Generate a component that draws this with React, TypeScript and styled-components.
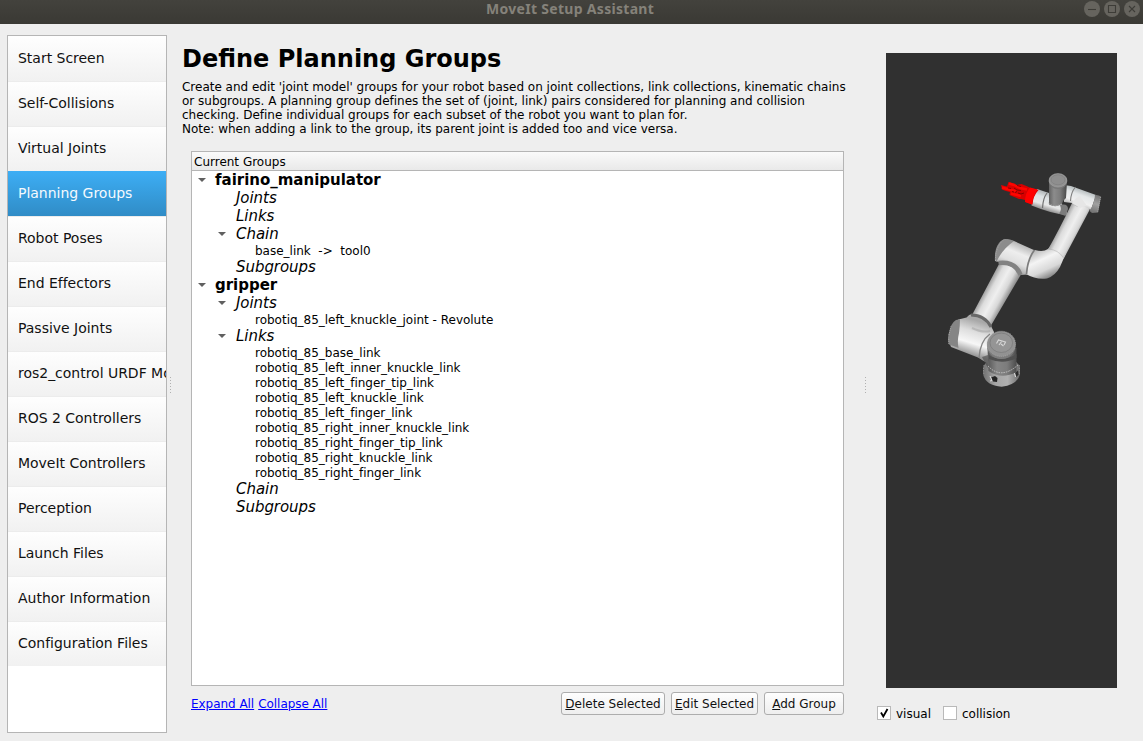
import React from "react";
import styled, { createGlobalStyle } from "styled-components";

const Global = createGlobalStyle`
  * { box-sizing: border-box; }
  body { margin: 0; background: #eeeeee; color: #000; font: 12px/14px "DejaVu Sans", sans-serif; overflow: hidden; }
`;

const Window = styled.div`
  width: 1143px;
  height: 741px;
  display: flex;
  flex-direction: column;
`;

const TitleBar = styled.header`
  height: 24px;
  flex: none;
  display: grid;
  grid-template-columns: 1fr auto 1fr;
  background: linear-gradient(#43423d, #3a3934);
  color: #85827a;
`;

const Title = styled.div`
  grid-column: 2;
  width: 171px;
  white-space: nowrap;
  font: bold 14px/18px "Noto Sans", sans-serif;
  letter-spacing: 0.3px;
`;

const WindowButtons = styled.div`
  display: flex;
  justify-content: flex-end;
  gap: 4px;
  padding: 1px 3px 0 0;
`;

const Content = styled.div`
  flex: 1;
  display: flex;
  padding-left: 7px;
`;

const Sidebar = styled.nav`
  width: 160px;
  height: 698px;
  margin-top: 11px;
  border: 1px solid #b5b5b5;
  background: #fff;
  overflow: hidden;
`;

const NavItem = styled.div<{ $active?: boolean }>`
  height: 45px;
  padding-left: 10px;
  font-size: 14px;
  line-height: ${(p) => (p.$active ? 44 : 43)}px;
  letter-spacing: -0.02px;
  white-space: nowrap;
  color: ${(p) => (p.$active ? "#f4f9fd" : "#111")};
  background: ${(p) =>
    p.$active ? "linear-gradient(#3daef5, #308cc6)" : "linear-gradient(#fefefe, #f1f1f1)"};
  border-top: ${(p) => (p.$active ? "0" : "1px solid #ececec")};

  &:first-child {
    border-top-color: #fefefe;
  }
`;

const Splitter = styled.div<{ $width: number }>`
  width: ${(p) => p.$width}px;
  flex: none;
  display: flex;
  flex-direction: column;
  align-items: center;
  gap: 2px;
  padding-top: 353px;
`;

const Dot = styled.i`
  width: 1px;
  height: 1px;
  background: #b0b0b0;
`;

const Main = styled.main`
  width: 686px;
  flex: none;
  padding: 20px 0 0 8px;
`;

const Heading = styled.h1`
  margin: 0;
  font-size: 24px;
  line-height: 30px;
  font-weight: bold;
`;

const Description = styled.p`
  margin: 6px 0 15px;
  white-space: pre;
  letter-spacing: -0.01px;
`;

const TreeBox = styled.section`
  width: 653px;
  height: 535px;
  margin-left: 9px;
  border: 1px solid #b5b5b5;
  background: #fff;
`;

const TreeHeader = styled.div`
  height: 19px;
  padding: 3px 2px 0;
  line-height: 14px;
  border-bottom: 1px solid #b5b5b5;
  background: linear-gradient(#fafafa, #e9e9e9);
`;

type RowKind = "group" | "section" | "leaf";

const TreeRow = styled.div<{ $kind: RowKind }>`
  display: flex;
  align-items: center;
  white-space: pre;
  height: ${(p) => (p.$kind === "leaf" ? 15 : 18)}px;
  line-height: ${(p) => (p.$kind === "leaf" ? 15 : 18)}px;
  font-size: ${(p) => (p.$kind === "leaf" ? 12 : 15)}px;
  font-weight: ${(p) => (p.$kind === "group" ? "bold" : "normal")};
  font-style: ${(p) => (p.$kind === "section" ? "italic" : "normal")};
  padding-left: ${(p) => ({ group: 6, section: 26, leaf: 46 })[p.$kind]}px;
  padding-top: ${(p) => (p.$kind === "leaf" ? 2 : 0)}px;
  letter-spacing: ${(p) => (p.$kind === "section" ? -0.05 : -0.01)}px;
`;

const ArrowCell = styled.span<{ $wide: boolean }>`
  width: ${(p) => (p.$wide ? 18 : 17)}px;
  flex: none;
  display: flex;
`;

const Actions = styled.div`
  width: 653px;
  margin: 6px 0 0 9px;
  display: flex;
  align-items: center;
  gap: 6px;
`;

const Links = styled.div`
  flex: 1;
  display: flex;
  gap: 4px;
  letter-spacing: -0.04px;
`;

const Link = styled.a`
  color: #0000ff;
  text-decoration: underline;
`;

const Button = styled.button<{ $width: number }>`
  width: ${(p) => p.$width}px;
  height: 23px;
  padding: 0;
  border: 1px solid #adadad;
  border-radius: 3px;
  background: linear-gradient(#fefefe, #eeeeee);
  font: 12px/14px "DejaVu Sans", sans-serif;
  color: #111;
  white-space: nowrap;
`;

const Preview = styled.aside`
  width: 266px;
  padding-top: 29px;
`;

const Viewport = styled.div`
  width: 231px;
  height: 635px;
  margin-left: 16px;
  background: #303030;
`;

const Checks = styled.div`
  display: flex;
  gap: 12px;
  margin: 18px 0 0 7px;
`;

const CheckLabel = styled.label`
  display: flex;
  align-items: flex-start;
  gap: 5px;
  height: 16px;
  line-height: 16px;
`;

const Box = styled.span`
  width: 14px;
  height: 14px;
  border: 1px solid #b9b9b9;
  background: #fff;
  display: flex;
`;

const pages = [
  "Start Screen",
  "Self-Collisions",
  "Virtual Joints",
  "Planning Groups",
  "Robot Poses",
  "End Effectors",
  "Passive Joints",
  "ros2_control URDF Modifications",
  "ROS 2 Controllers",
  "MoveIt Controllers",
  "Perception",
  "Launch Files",
  "Author Information",
  "Configuration Files",
];

const rows: [RowKind, string, boolean?][] = [
  ["group", "fairino_manipulator", true],
  ["section", "Joints"],
  ["section", "Links"],
  ["section", "Chain", true],
  ["leaf", "base_link  ->  tool0"],
  ["section", "Subgroups"],
  ["group", "gripper", true],
  ["section", "Joints", true],
  ["leaf", "robotiq_85_left_knuckle_joint - Revolute"],
  ["section", "Links", true],
  ["leaf", "robotiq_85_base_link"],
  ["leaf", "robotiq_85_left_inner_knuckle_link"],
  ["leaf", "robotiq_85_left_finger_tip_link"],
  ["leaf", "robotiq_85_left_knuckle_link"],
  ["leaf", "robotiq_85_left_finger_link"],
  ["leaf", "robotiq_85_right_inner_knuckle_link"],
  ["leaf", "robotiq_85_right_finger_tip_link"],
  ["leaf", "robotiq_85_right_knuckle_link"],
  ["leaf", "robotiq_85_right_finger_link"],
  ["section", "Chain"],
  ["section", "Subgroups"],
];

const Arrow = () => (
  <svg width="9" height="6" viewBox="0 0 9 6">
    <path d="M0 1h8L4 5z" fill="#606060" />
  </svg>
);

const WindowIcon = ({ d }: { d: string }) => (
  <svg width="16" height="16" viewBox="0 0 16 16">
    <circle cx="8" cy="8" r="8" fill="#66645e" />
    <path d={d} fill="none" stroke="#3d3c37" strokeWidth="1.1" />
  </svg>
);

const Tube = ({ id, from, to, stops }: { id: string; from: [number, number]; to: [number, number]; stops: string[] }) => (
  <linearGradient id={id} gradientUnits="userSpaceOnUse" x1={from[0]} y1={from[1]} x2={to[0]} y2={to[1]}>
    {stops.map((c, i) => (
      <stop key={i} offset={i / (stops.length - 1)} stopColor={c} />
    ))}
  </linearGradient>
);

const shine = ["#8f8f8f", "#dcdcdc", "#efefef", "#d8d8d8", "#888888"];

const Robot = () => (
  <svg width="231" height="635" viewBox="886 53 231 635" display="block">
    <defs>
      <Tube id="upper" from={[981, 295]} to={[1003, 307]} stops={shine} />
      <Tube id="fore" from={[1058, 227]} to={[1079, 238]} stops={shine} />
      <Tube id="elbow" from={[1024, 245]} to={[1013, 272]} stops={["#b5b5b5", "#eeeeee", "#e0e0e0", "#a0a0a0"]} />
      <Tube id="bend" from={[1036, 250]} to={[1050, 280]} stops={["#b8b8b8", "#f4f4f4", "#d8d8d8", "#6c6c6c"]} />
      <Tube id="shoulder" from={[975, 320]} to={[965, 353]} stops={["#a8a8a8", "#dedede", "#f7f7f7", "#969696"]} />
      <Tube id="column" from={[987, 360]} to={[1017, 360]} stops={["#555555", "#858585", "#7c7c7c", "#4a4a4a"]} />
      <Tube id="base" from={[983, 370]} to={[1020, 370]} stops={["#707070", "#a5a5a5", "#b0b0b0", "#6b6b6b"]} />
      <Tube id="wristV" from={[1048, 195]} to={[1066, 195]} stops={["#5a5a5a", "#8c8c8c", "#7c7c7c", "#4e4e4e"]} />
      <Tube id="wristH" from={[1082, 188]} to={[1075, 208]} stops={["#a8b0b2", "#e4e7e8", "#f0f0f0", "#a0a0a0"]} />
      <Tube id="wristL" from={[1048, 191]} to={[1042, 211]} stops={["#a5aaac", "#dde2e4", "#e7e7e7", "#777777"]} />
      <Tube id="capR" from={[1099, 195]} to={[1093, 213]} stops={["#707070", "#a0a0a0", "#707070"]} />
    </defs>

    {/* base flange */}
    <path d="M983.300 368Q985 361 990 361h24q5 2 6 7v6.500q-3 10.500-18.300 12.200Q986 385.500 983.300 375z" fill="url(#base)" />
    <path d="M984 365q-1 5 0 10M1019.300 365v10" stroke="#a8a8a8" strokeWidth=".7" strokeDasharray="1.500 1" fill="none" />
    <path d="M991 377.500l4-1.500 2.500 2-.5 4-4-.5z" fill="#242424" />
    <path d="M990 376l2 4.500-2 .5" stroke="#ddd" strokeWidth="1" fill="none" />
    <path d="M1015 373l3-2.500.5 4-2 2.500z" fill="#2c2c2c" />
    <path d="M1014.500 373l1 4" stroke="#e4e4e4" />

    {/* shoulder */}
    <path d="M958.500 319.500l8-2q3-4 6-3.500 13 2 18.500 12l3 6-4 33-12-7.500-27-10.500q-3-6 0-15 3-11 7.500-12.500z" fill="url(#shoulder)" />
    <path d="M960 319.500q-7-1-10 9.500-3.500 10-1 15.500l9.500 3.500q-1.500-7 .5-15 1-8 1-13.500z" fill="#858585" />
    <path d="M949 335l2-9M948.800 344v-5" stroke="#aaa" strokeWidth=".8" strokeDasharray="1 1" />
    <path d="M990 334q-10 7-11 24" fill="none" stroke="#858585" strokeWidth="1.400" />
    <path d="M972 328q10 5 18 3" fill="none" stroke="#999" strokeWidth="2" opacity=".45" />
    <path d="M982 357l6-2v13l-3-5z" fill="#444" opacity=".6" />

    {/* upper arm */}
    <path d="M972 315L998.500 265Q1011 262 1021 274.500L991 325.500Q985 316 972 315z" fill="url(#upper)" />
    <path d="M971 315q14 0 20 12" fill="none" stroke="#686868" strokeWidth="2.800" />

    {/* column and top cap */}
    <path d="M987.500 348h29v24q-15 8-28-1z" fill="url(#column)" />
    <path d="M989 355q13 8 27.500-1v4q-13 7-27.500 1z" fill="#505050" />
    <path d="M988 366q13 14 30-1" fill="none" stroke="#c9c9c9" strokeWidth=".9" strokeDasharray="1.500 1" />
    <ellipse cx="1001.300" cy="345.500" rx="14.300" ry="13.500" fill="#7c7c7c" />
    <ellipse cx="1001.300" cy="343.800" rx="14.200" ry="12.600" fill="#929292" stroke="#b4b4b4" strokeWidth=".6" strokeDasharray="1 1" />
    <ellipse cx="1001.300" cy="342.800" rx="11.300" ry="9.700" fill="#959595" stroke="#7c7c7c" strokeWidth=".8" />
    <path d="M996.500 343.500l2-3.500 7 2-1.500 3M999 345l3-4M1001 344l2.500 2" stroke="#d8d8d8" strokeWidth="1.100" fill="none" />

    {/* elbow */}
    <path d="M1005 239L1014 241 1035 250.500 1027 274.500 1021 275Q1016 263 999 262l-4-1q-1-13 10-22z" fill="url(#elbow)" />
    <path d="M1035 250q8 2.500 13-1l10-12 8 16-6 14q-5 9-13 11.500-11 1.500-21-4.500 1-15 9-24z" fill="url(#bend)" />
    <path d="M1014 241q-10-5-15 2-4.500 6-4 16l1.500 3q5-12 17.500-21z" fill="#8c8c8c" />
    <path d="M995.500 258q1-13 9-19" stroke="#b0b0b0" strokeWidth=".7" strokeDasharray="1 1" fill="none" />
    <path d="M998.500 263q17-2 22 12" fill="none" stroke="#828282" strokeWidth="4.500" />
    <path d="M1034.500 250q-7 9-8 24" fill="none" stroke="#7c7c7c" strokeWidth="1.700" />

    {/* forearm */}
    <path d="M1048 249.500Q1059 230 1072 203L1078 193 1094 199 1089 211 1063.500 259Q1057 250 1048 249.500z" fill="url(#fore)" />
    <path d="M1049 249q9 1 14 8" fill="none" stroke="#b0b0b0" strokeWidth=".5" />

    {/* upper wrist */}
    <path d="M1064 185l7 1 25 9-5 15q-6-5-11-3-5 0-8-4l-8-1z" fill="url(#wristH)" />
    <path d="M1080 196q-5 2-8 7l8 5 7-2z" fill="#e6e6e6" />
    <path d="M1095 195q3.500-.5 6 1.500l-3 16-6 .5-2.500-2q5-8 5.500-16z" fill="url(#capR)" />
    <path d="M1100.700 197l-3 15" stroke="#bbb" strokeWidth=".6" strokeDasharray="1 1" />
    <path d="M1075.500 187q-4.500 5-5 14" fill="none" stroke="#7d7d7d" strokeWidth="1.100" />

    {/* lower wrist */}
    <path d="M1037 189l12 4 18 16-.5 6q-14-1-35-9.500 0-11 5.500-16.500z" fill="url(#wristL)" />
    <path d="M1047 193q-4 5-4.500 15" fill="none" stroke="#717171" strokeWidth="1.200" />
    <path d="M1060 205q8-2 8 4l-2.500 7-6.500-2.500q3-3 1-8.500z" fill="#7c7c7c" />
    <path d="M1049 182h18l-1 16q-3 2-4 6-6 4-13 .5z" fill="url(#wristV)" />
    <path d="M1048.500 203q6 5 14 .5" fill="none" stroke="#a5a5a5" strokeWidth=".9" strokeDasharray="1.500 1" />
    <ellipse cx="1058" cy="181.500" rx="9.200" ry="7.500" fill="#777" />
    <ellipse cx="1058" cy="180.300" rx="8.900" ry="6.800" fill="#929292" stroke="#a8a8a8" strokeWidth=".5" />
    <ellipse cx="1058" cy="179.800" rx="7" ry="5" fill="#8e8e8e" stroke="#7c7c7c" strokeWidth=".6" />

    {/* gripper */}
    <path d="M1001 185l6 1.500 1.500-4.500 6 1.500 2 1.500 5-1 6 2.500 3 1.500 8 2q-5.500 6-6 14.500l-6-2-1.500-2.500-4-1-2 0-9.500-4 .5-3-4-1-4-1.500z" fill="#d80000" />
    <path d="M1030 187.500l7.500 2q-5 7-5.500 15l-7-2.500q0-9 5-14.500z" fill="#ff0000" />
    <path d="M1009 183.500l5 1.500 6 3 7 1.500M1002 187.500l9 2.500 5 1M1011 193.500l10 2.500" stroke="#ff0500" strokeWidth="2.400" fill="none" />
    <path d="M1008 188l3 .5M1014 188l3 2 4 .5M1012 191.500l2 .5M1016.500 191l-1 2M1018 193l3 1 3-1M1017 185.500l4 1" stroke="#7c0000" strokeWidth=".9" fill="none" />
  </svg>
);

const dots = [0, 1, 2, 3, 4, 5];

export default function App() {
  return (
    <Window>
      <Global />
      <TitleBar>
        <Title>MoveIt Setup Assistant</Title>
        <WindowButtons>
          <WindowIcon d="M4 8.500h8" />
          <WindowIcon d="M4.500 4.500h7v7h-7z" />
          <WindowIcon d="M5 5l6 6M11 5l-6 6" />
        </WindowButtons>
      </TitleBar>
      <Content>
        <Sidebar>
          {pages.map((p) => (
            <NavItem key={p} $active={p === "Planning Groups"}>
              {p}
            </NavItem>
          ))}
        </Sidebar>
        <Splitter $width={7}>
          {dots.map((d) => (
            <Dot key={d} />
          ))}
        </Splitter>
        <Main>
          <Heading>Define Planning Groups</Heading>
          <Description>
            {"Create and edit 'joint model' groups for your robot based on joint collections, link collections, kinematic chains\nor subgroups. A planning group defines the set of (joint, link) pairs considered for planning and collision\nchecking. Define individual groups for each subset of the robot you want to plan for.\nNote: when adding a link to the group, its parent joint is added too and vice versa."}
          </Description>
          <TreeBox>
            <TreeHeader>Current Groups</TreeHeader>
            {rows.map(([kind, text, open], i) => (
              <TreeRow key={i} $kind={kind}>
                <ArrowCell $wide={kind === "section"}>{open && <Arrow />}</ArrowCell>
                {text}
              </TreeRow>
            ))}
          </TreeBox>
          <Actions>
            <Links>
              <Link>Expand All</Link>
              <Link>Collapse All</Link>
            </Links>
            <Button $width={104}>
              <u>D</u>elete Selected
            </Button>
            <Button $width={87}>
              <u>E</u>dit Selected
            </Button>
            <Button $width={80}>
              <u>A</u>dd Group
            </Button>
          </Actions>
        </Main>
        <Splitter $width={10}>
          {dots.map((d) => (
            <Dot key={d} />
          ))}
        </Splitter>
        <Preview>
          <Viewport>
            <Robot />
          </Viewport>
          <Checks>
            <CheckLabel>
              <Box>
                <svg width="12" height="12" viewBox="0 0 12 12">
                  <path d="M3 5.500l2.300 4L9.500 2" fill="none" stroke="#000" strokeWidth="1.800" />
                </svg>
              </Box>
              visual
            </CheckLabel>
            <CheckLabel>
              <Box />
              collision
            </CheckLabel>
          </Checks>
        </Preview>
      </Content>
    </Window>
  );
}
